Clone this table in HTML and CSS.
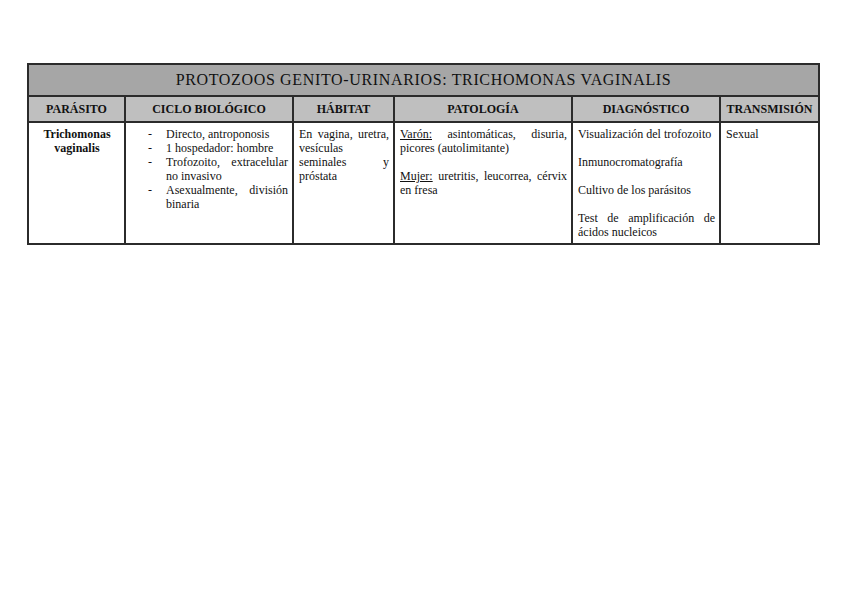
FILE: index.html
```html
<!DOCTYPE html>
<html lang="es">
<head>
<meta charset="utf-8">
<title>Protozoos genito-urinarios</title>
<link rel="stylesheet" href="styles.css">
</head>
<body>
<table class="tbl">
  <colgroup>
    <col class="c1"><col class="c2"><col class="c3"><col class="c4"><col class="c5"><col class="c6">
  </colgroup>
  <tr class="title-row"><th colspan="6">PROTOZOOS GENITO-URINARIOS: TRICHOMONAS VAGINALIS</th></tr>
  <tr class="head-row">
    <th>PARÁSITO</th><th>CICLO BIOLÓGICO</th><th>HÁBITAT</th><th>PATOLOGÍA</th><th>DIAGNÓSTICO</th><th>TRANSMISIÓN</th>
  </tr>
  <tr class="body-row">
    <td class="parasite">Trichomonas vaginalis</td>
    <td>
      <ul class="dash">
        <li>Directo, antroponosis</li>
        <li>1 hospedador: hombre</li>
        <li>Trofozoito, extracelular no invasivo</li>
        <li>Asexualmente, división binaria</li>
      </ul>
    </td>
    <td class="just">En vagina, uretra, vesículas seminales y próstata</td>
    <td class="just">
      <p><span class="u">Varón:</span> asintomáticas, disuria, picores (autolimitante)</p>
      <p><span class="u">Mujer:</span> uretritis, leucorrea, cérvix en fresa</p>
    </td>
    <td class="just">
      <p>Visualización del trofozoito</p>
      <p>Inmunocromatografía</p>
      <p>Cultivo de los parásitos</p>
      <p>Test de amplificación de ácidos nucleicos</p>
    </td>
    <td>Sexual</td>
  </tr>
</table>
</body>
</html>
```
FILE: styles.css
```css
html, body {
  margin: 0;
  padding: 0;
  background: #fff;
}
body {
  font-family: "Liberation Serif", "Times New Roman", "DejaVu Serif", serif;
  color: #111;
  padding: 63px 0 0 27px;
}
.tbl {
  border-collapse: collapse;
  table-layout: fixed;
  width: 792px;
  font-family: "Liberation Serif", "Times New Roman", "DejaVu Serif", serif;
}
.c1 { width: 97px; }
.c2 { width: 168px; }
.c3 { width: 101px; }
.c4 { width: 178px; }
.c5 { width: 148px; }
.c6 { width: 99px; }
.tbl th, .tbl td {
  border: 2px solid #2b2b2b;
  font-family: "Liberation Serif", "Times New Roman", "DejaVu Serif", serif;
}
.title-row th {
  background: #a6a6a6;
  height: 30px;
  font-weight: normal;
  font-size: 16px;
  letter-spacing: 0.65px;
  text-align: center;
  padding: 0;
}
.head-row th {
  background: #bfbfbf;
  height: 24px;
  font-size: 12px;
  font-weight: bold;
  text-align: center;
  padding: 0 2px;
  white-space: nowrap;
}
.body-row td {
  vertical-align: top;
  font-size: 12px;
  line-height: 14px;
  padding: 4px 4px 4px 5px;
  height: 112px;
}
.body-row td.parasite {
  font-weight: bold;
  text-align: center;
}
.just {
  text-align: justify;
}
.just p {
  margin: 0 0 14px 0;
}
.just p:last-child {
  margin-bottom: 0;
}
.u {
  text-decoration: underline;
}
.dash {
  list-style: none;
  margin: 0;
  padding: 0 0 0 35px;
  text-align: justify;
}
.dash li {
  position: relative;
}
.dash li::before {
  content: "-";
  position: absolute;
  left: -18px;
}
```
